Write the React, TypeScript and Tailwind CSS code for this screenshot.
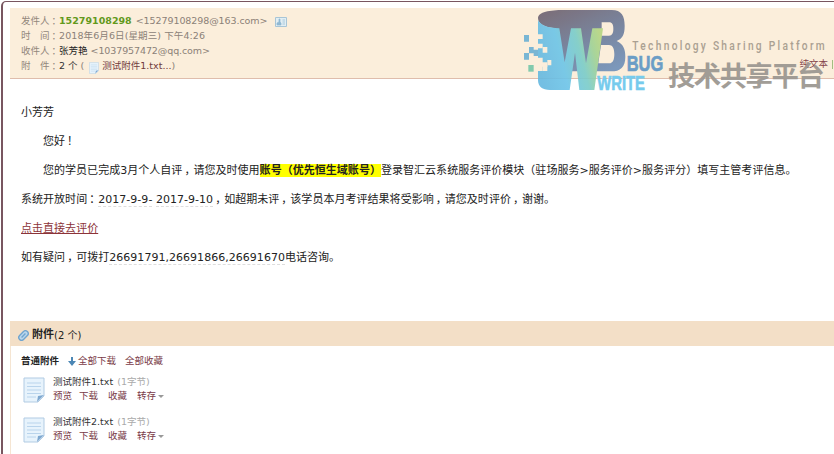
import React from "react";

function Logo() {
  return (
    <svg viewBox="0 0 957 300" className="pointer-events-none absolute left-[515px] top-0 h-[100px] w-[319px]">
      <defs>
        <linearGradient id="deep" x1="0.2" y1="0" x2="0.8" y2="1">
          <stop offset="0" stopColor="#6e6372" />
          <stop offset="0.5" stopColor="#6c7a98" />
          <stop offset="1" stopColor="#6f8fb8" />
        </linearGradient>
        <linearGradient id="sky" gradientUnits="userSpaceOnUse" x1="69" y1="190" x2="264" y2="140">
          <stop offset="0" stopColor="#66b9e0" />
          <stop offset="0.35" stopColor="#6cc4e8" />
          <stop offset="0.65" stopColor="#7accc8" />
          <stop offset="0.85" stopColor="#a0d294" />
          <stop offset="1" stopColor="#b4d582" />
        </linearGradient>
      </defs>
      <g opacity="0.9">
        <path fill="url(#deep)" fillRule="evenodd" d="M69 54C69 36 105 30 145 30H290C320 30 329 48 329 78C329 105 322 116 305 123C325 132 331 148 331 170C331 202 316 214 288 214H150L120 85C90 82 69 72 69 54ZM260 67V107H282C292 107 295 99 295 87C295 74 292 67 282 67ZM258 135L250 190H282C295 190 298 177 298 162C298 144 292 135 282 135Z" />
        <path fill="url(#sky)" d="M69 61C78 76 98 84 133 85L149 187L168 85H198L213 190L232 85H264L238 270H193L180 158L164 270H105C82 270 69 260 69 240V213H83V200H97V187H83V173H69V145H83V131H69V117H83V103H69Z" />
        <path fill="#6bb0d4" d="M27 105h15v20H27zM42 141h14v19H42zM27 159h15v20H27zM56 149h13v19H56z" />
        <path fill="#75c7a9" d="M40 195h16v20H40z" />
        <path fill="#faeedb" d="M83 141h14v17H83zM97 180h12v16H97zM83 196h14v17H83z" />
      </g>
      <text x="335" y="214" textLength="110" lengthAdjust="spacingAndGlyphs" fontSize="68" fontWeight="700" fontFamily="Liberation Sans, sans-serif" fill="#6b9dc6" stroke="#6b9dc6" strokeWidth="2">BUG</text>
      <text x="247" y="269" textLength="143" lengthAdjust="spacingAndGlyphs" fontSize="62" fontWeight="700" fontFamily="Liberation Sans, sans-serif" fill="#76cbed" stroke="#76cbed" strokeWidth="2">WRITE</text>
      <text transform="translate(352 151) scale(.85 1)" textLength="679" fontSize="36" fontWeight="500" fontFamily="Roboto, sans-serif" fill="#aaa092">Technology Sharing Platform</text>
      <text x="459" y="259" textLength="470" fontSize="82" fontWeight="700" fontFamily="Noto Sans CJK SC, sans-serif" fill="#9d9892" opacity=".95">技术共享平台</text>
    </svg>
  );
}

function NoteIcon({ className }: { className: string }) {
  return (
    <svg viewBox="0 0 22 26" className={className}>
      <path d="M1 1H21V19L15 25H1Z" fill="#e7f3fc" stroke="#b1cbe3" />
      <path d="M4 6H18M4 9.500H18M4 13H18M4 16.500H18M4 20H13" stroke="#b9d4ec" />
      <path d="M21 18L14 25L15 19Z" fill="#7ea8d0" />
    </svg>
  );
}

/* Full-width marks sit in the middle of their cell. */
function Mark({ children }: { children: string }) {
  return <span className="-mr-[2px] pl-[2px]">{children}</span>;
}

function Attachment({ name }: { name: string }) {
  return (
    <div className="flex h-[39.500px] pl-[12px]">
      <NoteIcon className="mt-[2px] h-[26px] w-[22px]" />
      <div className="ml-[8px] leading-[14px]">
        <div className="text-[#333]">
          {name} <span className="ml-px text-[#aaa]">(1字节)</span>
        </div>
        <div className="flex text-[#793b48]">
          <span className="w-[26px]">预览</span>
          <span className="w-[29px]">下载</span>
          <span className="w-[29px]">收藏</span>
          <span>转存</span>
          <span className="ml-[2px] mt-[6px] h-0 border-x-[3px] border-t-[3px] border-x-transparent border-t-[#999]" />
        </div>
      </div>
    </div>
  );
}

function Row({ label, children }: { label: string; children: React.ReactNode }) {
  return (
    <div className="flex h-[15px] items-center">
      <span className="w-[38px] text-[#92877c]">
        {label}
        <Mark>：</Mark>
      </span>
      {children}
    </div>
  );
}

export default function App() {
  return (
    <div className="relative h-[454px] w-[834px] overflow-hidden whitespace-nowrap bg-white pl-px pt-px font-['DejaVu_Sans','Noto_Sans_CJK_SC',sans-serif] text-[9.500px] text-[#222]">
      <div className="h-[453px] rounded-tl-[5px] border-l-2 border-t border-[#785660] pl-[7px] pt-[6px]">
        <header className="h-[71px] border-b border-[#dfbdac] bg-[#fbeedb] pl-[11px] pt-[6px] text-[#8b8178]">
          <Row label="发件人">
            <b className="text-[#62991c]">15279108298</b>
            <span className="ml-[4px] tracking-[-0.08px]">&lt;15279108298@163.com&gt;</span>
            <svg viewBox="0 0 12 10" className="ml-[8px] h-[10px] w-[12px]">
              <path d="M.5 .5H11.500V9.500H.5Z" fill="#e2eef3" stroke="#a8c5d6" />
              <path d="M2 8V6L4 5V2H5V5L6 6V8ZM7.500 3H10M7.500 5H10M7.500 7H10" fill="#90b8d3" stroke="#90b8d3" strokeWidth=".7" />
            </svg>
          </Row>
          <Row label="时　间">
            <span className="tracking-[0.1px]">2018年6月6日(星期三) 下午4:26</span>
          </Row>
          <Row label="收件人">
            <span className="text-[#222]">张芳艳</span>
            <span className="ml-[3px] tracking-[-0.1px]">&lt;1037957472@qq.com&gt;</span>
          </Row>
          <Row label="附　件">
            <span className="text-[#333]">2 个</span>
            <span className="ml-[3px]">(</span>
            <NoteIcon className="ml-[5px] mt-[2px] h-[12px] w-[10px]" />
            <span className="ml-[3px] text-[#713c3d]">测试附件1.txt...</span>)
            <span className="ml-auto flex items-center pb-[5px] text-[#85454b]">
              纯文本<span className="ml-[4px] mr-px h-[9px] w-px bg-[#a4bd82]" />
            </span>
          </Row>
        </header>
        <main className="h-[242px] pl-[11px] pt-[19px] text-[11px] leading-[29px] tracking-[0.03px]">
          <p>小芳芳</p>
          <p className="pl-[22px]">您好<Mark>！</Mark></p>
          <p className="pl-[22px]">
            您的学员已完成3月个人自评<Mark>，</Mark>请您及时使用
            <b className="bg-[#ffff00]">账号（优先恒生域账号）</b>
            登录智汇云系统服务评价模块（驻场服务&gt;服务评价&gt;服务评分）填写主管考评信息。
          </p>
          <p>
            系统开放时间<Mark>：</Mark>
            <span className="border-b border-dashed border-[#ddd]">2017-9-9-</span>{" "}
            <span className="border-b border-dashed border-[#ddd]">2017-9-10</span>
            <Mark>，</Mark>如超期未评<Mark>，</Mark>该学员本月考评结果将受影响<Mark>，</Mark>请您及时评价<Mark>，</Mark>谢谢。
          </p>
          <p><a className="text-[#8c3338] underline">点击直接去评价</a></p>
          <p>
            如有疑问<Mark>，</Mark>可拨打
            <span className="border-b border-dashed border-[#ddd]">26691791,26691866,26691670</span>
            电话咨询。
          </p>
        </main>
        <section className="h-[134px] border-l border-[#f5e5d2]">
          <h2 className="-ml-px flex h-[25px] items-center bg-[#f3dfc7] pl-[8px] pt-[3px] text-[11px]">
            <svg viewBox="0 0 12 12" className="mr-[3px] size-[11px]">
              <g transform="rotate(45 6 6)" fill="none" stroke="#70a4ce">
                <rect x="3" y="0" width="6" height="12" rx="3" fill="#b9d6ec" strokeWidth="1.500" />
                <path d="M6 3V9" strokeWidth="1.500" />
              </g>
            </svg>
            <b>附件</b><span className="text-[10px]">(2 个)</span>
          </h2>
          <div className="flex h-[29px] items-center pl-[10px] pt-[2px] text-[#793b48]">
            <b className="mr-[9px] text-[#222]">普通附件</b>
            <svg viewBox="0 0 8 9" className="mr-[2px] h-[9px] w-[8px]">
              <path d="M3 0H5V4H8L4 9L0 4H3Z" fill="#4c87b5" />
            </svg>
            <span className="mr-[9px]">全部下载</span>
            <span>全部收藏</span>
          </div>
          <Attachment name="测试附件1.txt" />
          <Attachment name="测试附件2.txt" />
        </section>
      </div>
      <Logo />
    </div>
  );
}
